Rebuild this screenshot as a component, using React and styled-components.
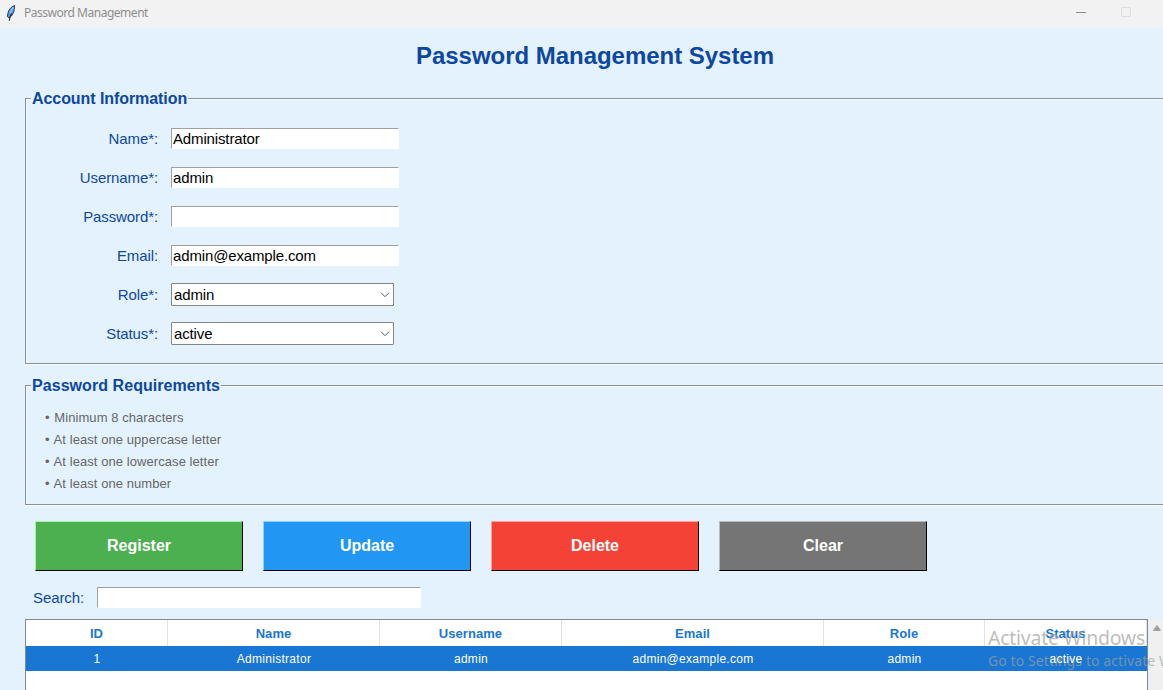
import React from "react";
import styled, { createGlobalStyle } from "styled-components";

const Global = createGlobalStyle`
  * { box-sizing: border-box; }
  html, body { margin: 0; padding: 0; overflow: hidden; }
  body { font-family: "Liberation Sans", Arial, sans-serif; }
`;

const Window = styled.div`
  position: relative;
  display: flex;
  flex-direction: column;
  width: 1163px;
  height: 690px;
  overflow: hidden;
  background: #e3f2fd;
`;

const TitleBar = styled.header`
  display: flex;
  align-items: center;
  flex: none;
  height: 28px;
  padding: 0 32px 3px 5px;
  background: #f2f2f2;
`;

const WindowTitle = styled.span`
  flex: 1;
  margin-left: 7px;
  font: 12px/16px "Noto Sans", sans-serif;
  letter-spacing: -0.48px;
  color: #8e8e8e;
`;

const Controls = styled.div`
  display: flex;
  align-items: center;
  gap: 35px;
  padding-bottom: 1px;
`;

const Minimize = styled.i`
  width: 10px;
  height: 1px;
  background: #8b8b8b;
`;

const Maximize = styled.i`
  width: 10px;
  height: 10px;
  border: 1px solid #dedede;
  border-radius: 1px;
`;

const Heading = styled.h1`
  flex: none;
  margin: 14px 0 0 27px;
  font-size: 24px;
  line-height: 28px;
  font-weight: bold;
  text-align: center;
  letter-spacing: -0.03px;
  color: #0d47a1;
`;

const Frame = styled.section`
  flex: none;
  height: ${(p) => p.$height}px;
  margin: ${(p) => p.$top}px 0 0 25px;
  border: 1px solid #87919b;
  border-right: 0;
  box-shadow: inset 1px 1px 0 #fff, 0 1px 0 #fff;
`;

const Legend = styled.h2`
  width: ${(p) => p.$width}px;
  height: 20px;
  margin: -10px 0 0 5px;
  padding-left: 1px;
  font-size: 16px;
  line-height: 20px;
  white-space: nowrap;
  letter-spacing: ${(p) => p.$track || 0}px;
  color: #0d47a1;
  background: #e3f2fd;
`;

const Form = styled.div`
  display: flex;
  flex-direction: column;
  padding-top: 10px;
`;

const Field = styled.div`
  display: flex;
  align-items: center;
  height: 39px;
`;

const Label = styled.label`
  width: ${(p) => p.$width || 132}px;
  margin-right: 13px;
  font-size: 15px;
  line-height: 20px;
  text-align: right;
  white-space: nowrap;
  letter-spacing: -0.1px;
  color: #0d47a1;
`;

const Entry = styled.div`
  width: ${(p) => p.$width || 228}px;
  height: 21px;
  padding-left: 1px;
  border: 1px solid #fff;
  border-top-color: #a0a0a0;
  border-left-color: #a0a0a0;
  font-size: 15px;
  line-height: 20px;
  letter-spacing: -0.14px;
  color: #000;
  background: #fff;
`;

const Combo = styled.div`
  display: flex;
  align-items: center;
  justify-content: space-between;
  width: 223px;
  height: 23px;
  padding: 0 3px 0 2px;
  border: 1px solid #868686;
  border-radius: 1px;
  font-size: 15px;
  line-height: 21px;
  letter-spacing: -0.14px;
  color: #000;
  background: #fff;
`;

const Rules = styled.ul`
  margin: 11px 0 0;
  padding: 0 0 0 19px;
  list-style: none;
`;

const Rule = styled.li`
  height: 22px;
  font-size: 13px;
  line-height: 22px;
  letter-spacing: 0.07px;
  color: #666;
`;

const Bullet = styled.span`
  margin-right: 1px;
`;

const Actions = styled.div`
  display: flex;
  flex: none;
  gap: 20px;
  margin: 16px 0 0 35px;
`;

const Button = styled.button`
  width: 208px;
  height: 50px;
  padding: 0 0 1px;
  border: 1px solid #000;
  border-top-color: ${(p) => p.$light};
  border-left-color: ${(p) => p.$light};
  font: bold 16px/20px "Liberation Sans", Arial, sans-serif;
  color: #fff;
  background: ${(p) => p.$fill};
`;

const SearchRow = styled.div`
  display: flex;
  align-items: center;
  flex: none;
  height: 21px;
  margin: 16px 0 0 33px;
`;

const TableArea = styled.div`
  display: flex;
  flex: 1;
  margin: 11px 0 0 25px;
`;

const Table = styled.div`
  width: 1123px;
  border: 1px solid #828790;
  border-bottom: 0;
  background: #fff;
`;

const Row = styled.div`
  display: grid;
  grid-template-columns: 142px 212px 182px 262px 161px 162px;
  height: 25px;
  font-size: 12px;
  line-height: 24px;
  text-align: center;
  letter-spacing: 0.28px;
  color: #fff;
  background: #1976d2;
`;

const HeaderRow = styled(Row)`
  height: 26px;
  font-size: 13px;
  font-weight: bold;
  letter-spacing: 0.06px;
  color: #1976d2;
  background: #fff;
`;

const HeaderCell = styled.div`
  padding-top: 2px;
  border-right: 1px solid #e2e2e2;
`;

const Cell = styled.div`
  position: relative;
  z-index: 1;
  padding-top: 1px;
`;

const ScrollBar = styled.div`
  display: flex;
  justify-content: center;
  flex: 1;
  margin-left: 1px;
  padding: 6px 0 0 2px;
  background: #f0f0f0;
`;

const Watermark = styled.div`
  position: absolute;
  left: 988px;
  top: 625px;
  width: 200px;
  font-family: "Noto Sans", sans-serif;
  white-space: nowrap;
  color: rgba(160, 160, 160, 0.7);
`;

const WatermarkTitle = styled.div`
  font-size: 19.5px;
  line-height: 26px;
  letter-spacing: -0.26px;
`;

const WatermarkNote = styled.div`
  font-size: 14px;
  line-height: 20px;
  letter-spacing: 0.1px;
`;

const Feather = () => (
  <svg width="12" height="18" viewBox="0 0 12 18">
    <path d="M9.500 1.500C6.500 2.500 3.500 5.500 3 9L2.300 12.500L4 14C7.500 12 9.800 7.500 9.500 1.500Z" fill="#4f94e8" stroke="#26303c" strokeWidth="0.900" />
    <path d="M6.600 9.500C5.600 11.500 4.800 13.500 4.300 16.800" fill="none" stroke="#111820" strokeWidth="1" />
    <path d="M8.200 3.500L4.800 9" stroke="#8fc3fa" strokeWidth="1.600" />
  </svg>
);

const Chevron = () => (
  <svg width="10" height="6" viewBox="0 0 10 6">
    <path d="M1 0.700L5 4.700L9 0.700" fill="none" stroke="#5c5c5c" strokeWidth="1" />
  </svg>
);

const fields = [
  ["Name*:", "Administrator", "entry"],
  ["Username*:", "admin", "entry"],
  ["Password*:", "", "entry"],
  ["Email:", "admin@example.com", "entry"],
  ["Role*:", "admin", "combo"],
  ["Status*:", "active", "combo"],
];

const rules = [
  "Minimum 8 characters",
  "At least one uppercase letter",
  "At least one lowercase letter",
  "At least one number",
];

const actions = [
  ["Register", "#4caf50", "#a5f3a8"],
  ["Update", "#2196f3", "#8fd0ff"],
  ["Delete", "#f44336", "#ffa39c"],
  ["Clear", "#757575", "#bababa"],
];

const columns = ["ID", "Name", "Username", "Email", "Role", "Status"];
const record = ["1", "Administrator", "admin", "admin@example.com", "admin", "active"];

export default function App() {
  return (
    <Window>
      <Global />
      <TitleBar>
        <Feather />
        <WindowTitle>Password Management</WindowTitle>
        <Controls>
          <Minimize />
          <Maximize />
        </Controls>
      </TitleBar>
      <Heading>Password Management System</Heading>
      <Frame $top={28} $height={266}>
        <Legend $width={157} $track={-0.07}>Account Information</Legend>
        <Form>
          {fields.map(([label, value, kind]) => (
            <Field key={label}>
              <Label>{label}</Label>
              {kind === "entry" ? (
                <Entry>{value}</Entry>
              ) : (
                <Combo>
                  {value}
                  <Chevron />
                </Combo>
              )}
            </Field>
          ))}
        </Form>
      </Frame>
      <Frame $top={21} $height={120}>
        <Legend $width={190} $track={0.06}>Password Requirements</Legend>
        <Rules>
          {rules.map((rule) => (
            <Rule key={rule}>
              <Bullet>•</Bullet> {rule}
            </Rule>
          ))}
        </Rules>
      </Frame>
      <Actions>
        {actions.map(([name, fill, light]) => (
          <Button key={name} $fill={fill} $light={light}>
            {name}
          </Button>
        ))}
      </Actions>
      <SearchRow>
        <Label $width={51}>Search:</Label>
        <Entry $width={324} />
      </SearchRow>
      <TableArea>
        <Table>
          <HeaderRow>
            {columns.map((name) => (
              <HeaderCell key={name}>{name}</HeaderCell>
            ))}
          </HeaderRow>
          <Row>
            {record.map((value, i) => (
              <Cell key={i}>{value}</Cell>
            ))}
          </Row>
        </Table>
        <ScrollBar>
          <svg width="8" height="6" viewBox="0 0 8 6">
            <path d="M4 0.500L7.500 5.500H0.500Z" fill="#a0a0a0" stroke="#a0a0a0" strokeLinejoin="round" />
          </svg>
        </ScrollBar>
      </TableArea>
      <Watermark>
        <WatermarkTitle>Activate Windows</WatermarkTitle>
        <WatermarkNote>Go to Settings to activate Windows.</WatermarkNote>
      </Watermark>
    </Window>
  );
}
